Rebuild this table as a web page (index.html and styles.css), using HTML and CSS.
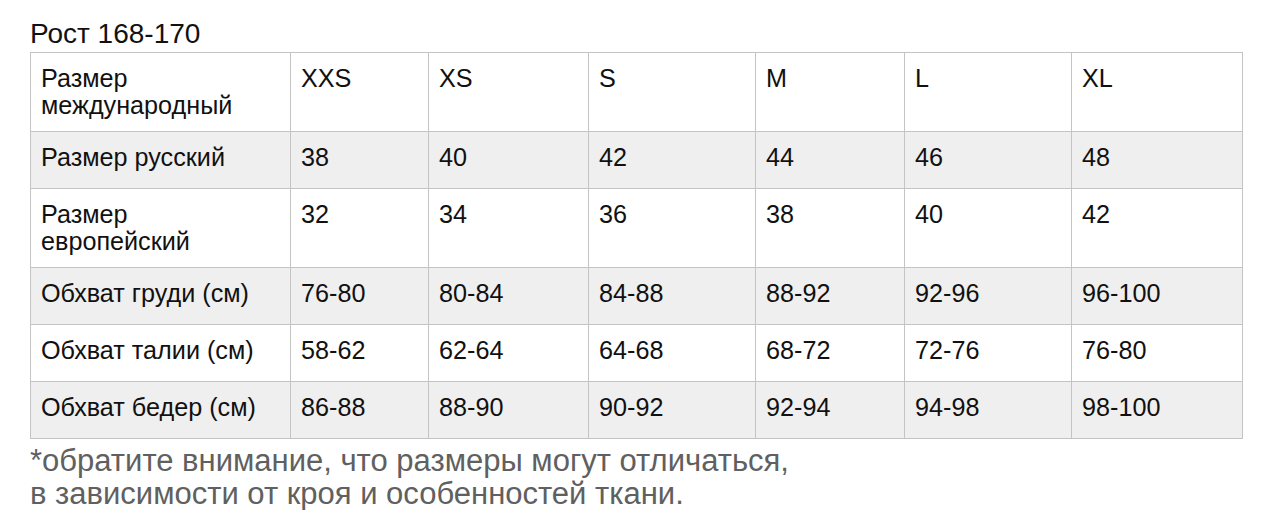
FILE: index.html
```html
<!DOCTYPE html>
<html lang="ru">
<head>
<meta charset="utf-8">
<title>Рост 168-170</title>
<link rel="stylesheet" href="styles.css">
</head>
<body>
<div class="page">
  <h2 class="title">Рост 168-170</h2>
  <table class="sizes">
    <colgroup>
      <col class="c-label">
      <col class="c1">
      <col class="c2">
      <col class="c3">
      <col class="c4">
      <col class="c5">
      <col class="c6">
    </colgroup>
    <tbody>
      <tr><td>Размер<br>международный</td><td>XXS</td><td>XS</td><td>S</td><td>M</td><td>L</td><td>XL</td></tr>
      <tr class="alt"><td>Размер русский</td><td>38</td><td>40</td><td>42</td><td>44</td><td>46</td><td>48</td></tr>
      <tr><td>Размер<br>европейский</td><td>32</td><td>34</td><td>36</td><td>38</td><td>40</td><td>42</td></tr>
      <tr class="alt"><td>Обхват груди (см)</td><td>76-80</td><td>80-84</td><td>84-88</td><td>88-92</td><td>92-96</td><td>96-100</td></tr>
      <tr><td>Обхват талии (см)</td><td>58-62</td><td>62-64</td><td>64-68</td><td>68-72</td><td>72-76</td><td>76-80</td></tr>
      <tr class="alt"><td>Обхват бедер (см)</td><td>86-88</td><td>88-90</td><td>90-92</td><td>92-94</td><td>94-98</td><td>98-100</td></tr>
    </tbody>
  </table>
  <p class="note">*обратите внимание, что размеры могут отличаться,<br>в зависимости от кроя и особенностей ткани.</p>
</div>
</body>
</html>
```
FILE: styles.css
```css
html, body {
  margin: 0;
  padding: 0;
  background: #ffffff;
}
body {
  font-family: "Liberation Sans", Arial, sans-serif;
  color: #111111;
}
.page {
  padding: 16px 0 0 30px;
}
.title {
  margin: 0;
  font-size: 28px;
  font-weight: normal;
  line-height: 36px;
  color: #111111;
}
.sizes {
  border-collapse: collapse;
  table-layout: fixed;
  width: 1212px;
  font-size: 25.2px;
  line-height: 27px;
}
.c-label { width: 260px; }
.c1 { width: 138px; }
.c2 { width: 160px; }
.c3 { width: 167px; }
.c4 { width: 149px; }
.c5 { width: 167px; }
.c6 { width: 171px; }
.sizes tr {
  height: 57px;
}
.sizes td {
  border: 1px solid #c4c4c4;
  padding: 12px 10px 12px 10px;
  vertical-align: top;
  text-align: left;
}
.sizes tr.alt td {
  background: #efefef;
}
.note {
  margin: 5px 0 0 0;
  font-size: 31px;
  line-height: 33px;
  color: #606060;
}
```
